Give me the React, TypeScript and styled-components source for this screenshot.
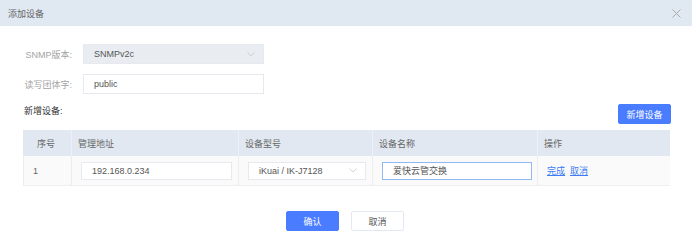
import styled, { createGlobalStyle } from 'styled-components';

const GlobalStyle = createGlobalStyle`
  html, body {
    margin: 0;
    padding: 0;
    background: #ffffff;
  }
  body {
    font-family: "Liberation Sans", Arial, "Noto Sans CJK SC", sans-serif;
    font-size: 9px;
    color: #333;
  }
`;

const Dialog = styled.div`
  width: 692px;
  height: 247px;
  background: #fff;
  display: flex;
  flex-direction: column;
`;

const Header = styled.div`
  height: 26px;
  background: #e0e8f2;
  display: flex;
  align-items: center;
  justify-content: space-between;
  padding: 0 11px 0 8px;
  box-sizing: border-box;
  color: #666;
  font-size: 9px;
`;

const Close = styled.span`
  width: 9px;
  height: 9px;
  display: flex;
`;

const Body = styled.div`
  padding: 18px 21px 0 23px;
  display: flex;
  flex-direction: column;
`;

const FormRow = styled.div`
  display: flex;
  align-items: center;
  height: 20px;
  margin-bottom: 10px;
`;

const Label = styled.label`
  width: 49px;
  text-align: right;
  white-space: nowrap;
  color: #a3a3a3;
  font-size: 9px;
  margin-right: 11px;
`;

const Field = styled.div<{ $w: number; $disabled?: boolean; $focus?: boolean; $h?: number }>`
  width: ${({ $w }) => $w}px;
  height: ${({ $h }) => $h ?? 20}px;
  box-sizing: border-box;
  border: 1px solid ${({ $focus }) => ($focus ? '#8fb8f5' : '#e6e9ee')};
  background: ${({ $disabled }) => ($disabled ? '#e9edf1' : '#fff')};
  display: flex;
  align-items: center;
  justify-content: space-between;
  padding: 0 8px 0 10px;
  color: #555;
  font-size: 9px;
  white-space: nowrap;
`;

const Chevron = () => (
  <svg width="8" height="5" viewBox="0 0 8 5">
    <path d="M0.5 0.5 L4 4 L7.5 0.5" fill="none" stroke="#c8c8c8" strokeWidth="0.8" />
  </svg>
);

const SectionRow = styled.div`
  display: flex;
  justify-content: space-between;
  align-items: flex-start;
`;

const SectionTitle = styled.div`
  color: #333;
  font-size: 9px;
  line-height: 14px;
  padding-left: 1px;
`;

const Button = styled.button<{ $primary?: boolean }>`
  width: 53px;
  height: 20px;
  box-sizing: border-box;
  border: 1px solid ${({ $primary }) => ($primary ? '#4a7cff' : '#e3e8f1')};
  background: ${({ $primary }) => ($primary ? '#4a7cff' : '#fff')};
  color: ${({ $primary }) => ($primary ? '#fff' : '#555')};
  font-family: inherit;
  font-size: 9px;
  border-radius: 2px;
  padding: 0;
  cursor: pointer;
`;

const Table = styled.div`
  margin-top: 6px;
  width: 647px;
  display: grid;
  grid-template-columns: 48px 167px 134px 165px 133px;
`;

const HeadCell = styled.div`
  height: 26px;
  background: #e1e8f1;
  border-left: 1px solid #edf1f6;
  display: flex;
  align-items: center;
  padding-left: 6px;
  color: #666;
  font-size: 9px;
  &:first-child {
    border-left: none;
    padding-left: 14px;
  }
`;

const Cell = styled.div`
  height: 30px;
  box-sizing: border-box;
  background: #fafafa;
  border-left: 1px solid #ededed;
  border-bottom: 1px solid #eeeeee;
  display: flex;
  align-items: center;
  padding-left: 9px;
  color: #666;
  font-size: 9px;
  &:first-child {
    border-left: none;
    padding-left: 16px;
  }
`;

const Links = styled.div`
  display: flex;
  gap: 5px;
`;

const Link = styled.a`
  color: #3d7cf5;
  text-decoration: underline;
  font-size: 9px;
`;

const Footer = styled.div`
  display: flex;
  justify-content: center;
  gap: 12px;
  margin-top: 25px;
  padding-right: 4px;
`;

export default function App() {
  return (
    <Dialog>
      <GlobalStyle />
      <Header>
        <span>添加设备</span>
        <Close>
          <svg width="9" height="9" viewBox="0 0 9 9">
            <path d="M0.5 0.5 L8.5 8.5 M8.5 0.5 L0.5 8.5" stroke="#a9a9a9" strokeWidth="1" />
          </svg>
        </Close>
      </Header>
      <Body>
        <FormRow>
          <Label>SNMP版本:</Label>
          <Field $w={181} $disabled>
            <span>SNMPv2c</span>
            <Chevron />
          </Field>
        </FormRow>
        <FormRow>
          <Label>读写团体字:</Label>
          <Field $w={181}>
            <span>public</span>
          </Field>
        </FormRow>
        <SectionRow>
          <SectionTitle>新增设备:</SectionTitle>
          <Button $primary>新增设备</Button>
        </SectionRow>
        <Table>
          <HeadCell>序号</HeadCell>
          <HeadCell>管理地址</HeadCell>
          <HeadCell>设备型号</HeadCell>
          <HeadCell>设备名称</HeadCell>
          <HeadCell>操作</HeadCell>
          <Cell>1</Cell>
          <Cell>
            <Field $w={151} $h={18}>
              <span>192.168.0.234</span>
            </Field>
          </Cell>
          <Cell>
            <Field $w={118} $h={18}>
              <span>iKuai / IK-J7128</span>
              <Chevron />
            </Field>
          </Cell>
          <Cell>
            <Field $w={150} $h={18} $focus>
              <span>爱快云管交换</span>
            </Field>
          </Cell>
          <Cell>
            <Links>
              <Link>完成</Link>
              <Link>取消</Link>
            </Links>
          </Cell>
        </Table>
        <Footer>
          <Button $primary>确认</Button>
          <Button>取消</Button>
        </Footer>
      </Body>
    </Dialog>
  );
}
